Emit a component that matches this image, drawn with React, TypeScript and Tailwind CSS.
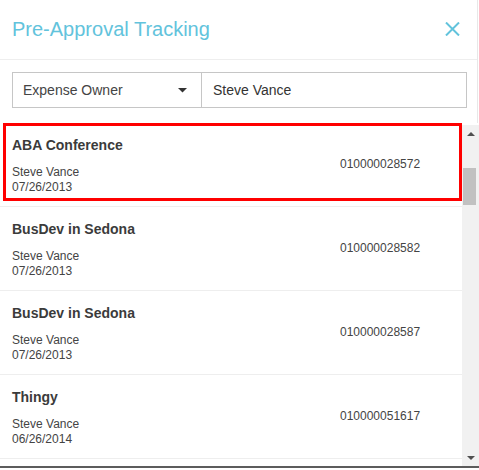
const items = [
  { title: "ABA Conference", owner: "Steve Vance", date: "07/26/2013", id: "010000028572" },
  { title: "BusDev in Sedona", owner: "Steve Vance", date: "07/26/2013", id: "010000028582" },
  { title: "BusDev in Sedona", owner: "Steve Vance", date: "07/26/2013", id: "010000028587" },
  { title: "Thingy", owner: "Steve Vance", date: "06/26/2014", id: "010000051617" },
];

function ListItem({ item, selected }: { item: (typeof items)[number]; selected: boolean }) {
  return (
    <div className="relative flex h-[84px] shrink-0 border-b border-[#eeeeee] px-[12px] pt-[13px]">
      {selected && (
        <div className="absolute left-[3px] top-0 h-[78px] w-[459px] border-[3px] border-[#ff0000]" />
      )}
      <div className="w-[328px]">
        <div className="text-[14px] font-bold leading-[18px] text-[#3b3b3b]">{item.title}</div>
        <div className="mt-[11px] text-[12px] leading-[15px] text-[#444]">{item.owner}</div>
        <div className="text-[12px] leading-[15px] text-[#444]">{item.date}</div>
      </div>
      <div className="pt-[21px] text-[12px] leading-[15px] text-[#444]">{item.id}</div>
    </div>
  );
}

export default function App() {
  return (
    <div
      className="relative h-[470px] w-[479px] overflow-hidden bg-white"
      style={{ fontFamily: '"Liberation Sans", Arial, sans-serif' }}
    >
      <div className="h-[123px] w-[478px] border-r border-[#e8e8e8]">
        <div className="flex h-[60px] items-center justify-between border-b border-[#eeeeee] pl-[12px] pr-[17px]">
          <h1 className="pb-[2px] text-[20px] text-[#62c3dc]">Pre-Approval Tracking</h1>
          <svg width="15" height="14" viewBox="0 0 15 14" className="mb-[1px]">
            <path d="M1 0.5 L14 13.5 M14 0.5 L1 13.5" stroke="#62c3dc" strokeWidth="2" />
          </svg>
        </div>
        <div className="ml-[12px] mt-[12px] flex h-[36px] w-[455px] border border-[#c6c6c6]">
          <div className="flex w-[189px] items-center justify-between border-r border-[#c6c6c6] pl-[10px] pr-[14px] text-[14px] text-[#444]">
            <span>Expense Owner</span>
            <svg width="9" height="5" viewBox="0 0 9 5">
              <path d="M0 0 L9 0 L4.5 4.5 Z" fill="#333" />
            </svg>
          </div>
          <div className="flex items-center pl-[11px] text-[14px] text-[#333]">Steve Vance</div>
        </div>
      </div>

      <div className="flex h-[345px] border-b-2 border-[#5c5c5c]">
        <div className="flex w-[462px] flex-col overflow-hidden">
          {items.map((item, i) => (
            <ListItem key={i} item={item} selected={i === 0} />
          ))}
        </div>
        <div className="mt-[2px] flex w-[17px] flex-col bg-[#f1f1f1]">
          <div className="flex h-[17px] items-center justify-center">
            <svg width="8" height="4" viewBox="0 0 8 4">
              <path d="M0 4 L8 4 L4 0 Z" fill="#505050" />
            </svg>
          </div>
          <div className="ml-[1px] mt-[26px] h-[37px] w-[13px] bg-[#c1c1c1]" />
          <div className="flex-1" />
          <div className="flex h-[17px] items-center justify-center">
            <svg width="8" height="4" viewBox="0 0 8 4">
              <path d="M0 0 L8 0 L4 4 Z" fill="#505050" />
            </svg>
          </div>
        </div>
      </div>
    </div>
  );
}
